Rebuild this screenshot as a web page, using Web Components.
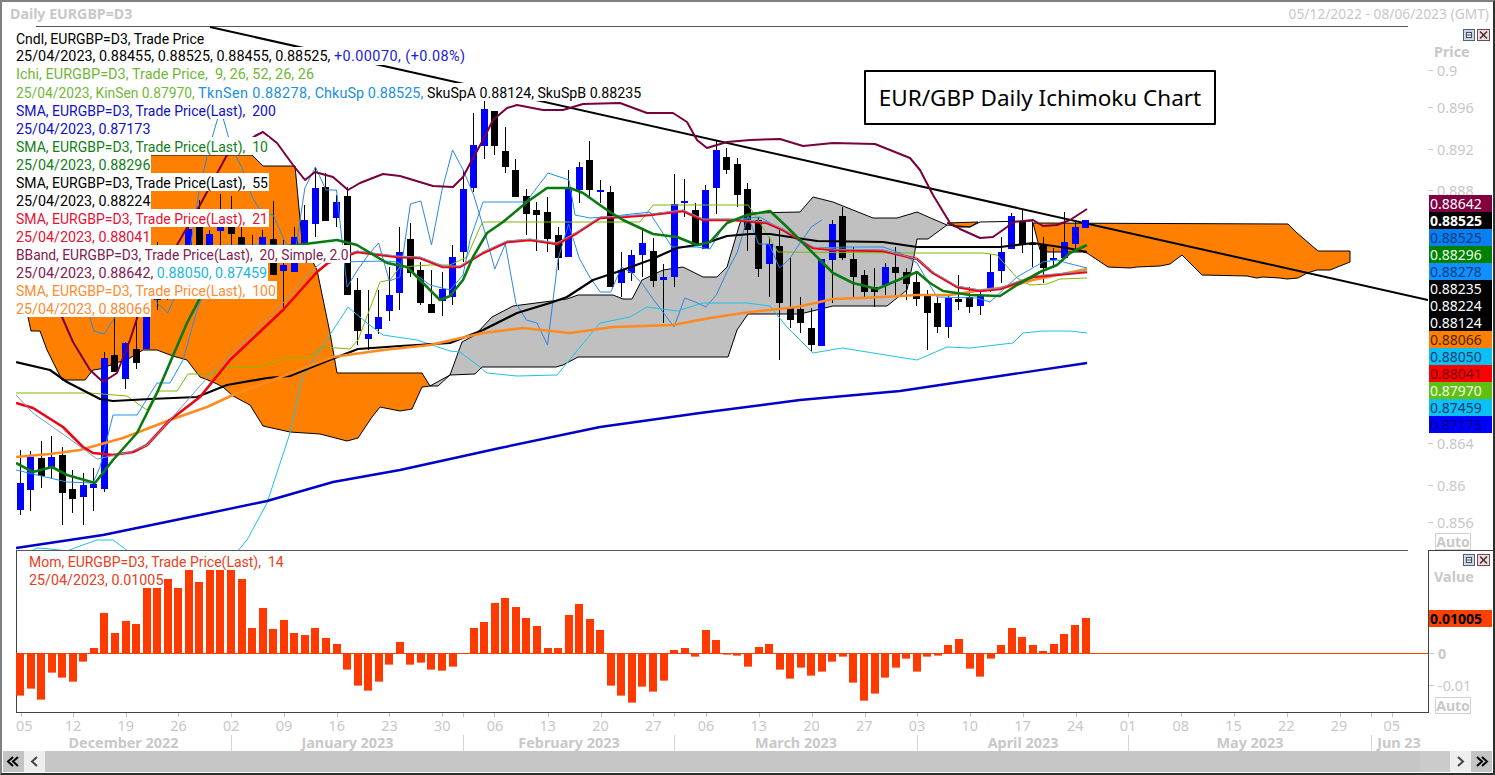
<!DOCTYPE html>
<html><head><meta charset="utf-8"><title>EUR/GBP</title>
<style>html,body{margin:0;padding:0;background:#fff}body{font-family:"Noto Sans","Liberation Sans",sans-serif}</style>
</head><body>
<chart-window></chart-window>
<script>
const FONT='"Noto Sans","Liberation Sans",sans-serif';
const LFONT='Roboto,"Noto Sans",sans-serif';
const X=i=>20+10.55*i;
// [type, bodyTop, bodyBottom, wickTop, wickBottom]
const C=`b 483 510 450 515|b 457 490 451 511|k 458 476 441 488|b 457 467 436 478|k 455 493 447 525|k 489 499 470 513|b 485 497 473 525|b 484 488 468 511|b 358 489 352 492|k 355 372 317 372|b 343 379 342 389|k 349 363 317 369|b 300 349 285 349|k 295 300 242 310|k 285 295 270 300|k 270 280 250 290|b 229 255 225 262|k 227 262 200 262|b 234 260 230 265|b 227 231 194 245|k 227 234 196 245|k 237 255 227 270|k 245 255 235 265|b 237 262 230 270|k 239 275 201 275|b 265 271 240 308|b 237 272 227 272|b 220 258 205 262|b 188 224 167 237|k 187 221 173 221|b 202 218 195 227|k 196 295 187 295|k 290 331 278 345|b 334 339 290 350|b 317 329 290 334|b 295 311 267 321|b 252 293 227 310|k 239 273 223 277|k 270 303 262 305|k 304 313 270 313|b 289 301 272 316|b 257 297 245 305|b 189 252 170 262|b 145 188 113 192|b 109 146 101 159|k 111 146 111 155|k 151 167 127 173|k 170 197 159 197|k 196 214 189 235|k 210 215 202 251|k 212 239 197 252|k 235 258 227 270|b 188 257 170 257|b 167 190 162 203|k 160 190 141 197|b 190 192 180 203|k 192 287 186 287|b 270 283 252 297|b 255 273 250 281|b 243 255 228 277|k 251 281 238 287|b 277 280 264 323|b 204 277 174 287|b 201 203 179 217|k 210 245 203 245|b 190 249 185 249|b 150 188 140 214|k 157 170 148 174|k 164 195 158 207|k 189 230 183 251|k 220 269 217 277|b 244 264 237 297|k 246 303 230 360|k 308 320 257 328|k 309 323 297 333|k 328 345 308 352|b 259 346 259 346|b 224 260 220 303|k 216 258 207 260|k 259 277 247 298|k 275 292 270 298|k 287 292 268 307|b 267 285 263 295|k 267 273 247 297|k 272 284 268 300|k 282 299 272 306|k 296 313 290 350|k 303 327 297 333|b 298 327 295 338|k 299 302 275 310|k 297 307 287 313|b 295 306 292 315|b 272 288 254 292|b 252 271 237 283|b 216 249 213 249|k 222 244 210 253|k 243 244 222 267|k 244 268 237 283|b 258 260 248 268|b 242 258 212 258|b 227 244 220 250|b 220 228 220 228`
 .split('|').map(s=>{const p=s.split(' ');return {t:p[0],a:+p[1],b:+p[2],w:+p[3],z:+p[4]}});
const close=c=>c.t==='b'?c.a:c.b;
const L={
 sma200:'16,548 103,535 200,515 267,501 333,482 400,470 500,448 600,427 700,413 800,400 900,391 1000,376 1087,363',
 upper:'16,250 40,290 62,317 73,342 90,370 103,382 117,373 130,340 143,300 177,245 200,205 227,155 255,136 263,132 277,143 293,165 305,180 315,172 333,177 348,190 360,183 383,174 400,176 433,186 453,187 463,177 472,160 483,140 493,120 507,108 517,105 543,110 563,110 583,104 620,103 647,113 673,113 687,122 697,140 707,148 727,142 750,140 780,139 803,146 833,143 875,144 910,158 920,170 933,195 950,223 960,229 980,238 993,237 1007,227 1013,222 1033,220 1043,226 1057,225 1070,220 1087,209',
 lower:'16,560 37,548 50,549 67,551 80,546 97,540 113,540 128,551 230,560 247,540 267,503 290,433 302,377 320,350 348,307 367,323 383,335 417,340 450,351 460,352 480,367 487,373 517,376 557,375 567,363 600,323 630,317 647,307 677,311 703,303 747,303 770,306 787,327 813,353 842,348 917,360 947,347 970,348 1013,343 1023,333 1043,331 1070,331 1087,333',
 mid:'16,395 33,413 67,437 97,459 130,452 147,445 170,420 207,378 233,353 283,303 310,272 322,262 357,251 397,256 420,257 443,266 460,266 483,252 507,241 530,239 557,243 577,232 600,217 623,216 650,214 683,210 703,219 733,219 767,222 783,229 813,247 833,249 883,250 917,259 933,272 957,286 980,290 1000,288 1033,276 1087,271',
 tenkan:'16,470 50,478 67,482 93,483 100,467 113,415 137,415 157,383 170,383 183,360 197,310 205,290 225,245 263,245 285,245 310,262 340,262 385,261 397,262 410,270 430,285 450,290 463,275 470,240 483,202 526,202 548,173 569,180 575,215 590,218 607,217 623,215 650,212 653,218 672,247 697,247 710,249 720,232 727,222 740,219 760,217 777,227 797,240 812,248 847,247 883,247 900,253 917,263 927,280 937,297 977,298 990,302 1017,277 1043,262 1057,260 1067,263 1087,268',
 kijun:'16,393 90,393 127,396 147,410 157,391 177,391 188,374 213,374 227,367 260,367 283,358 307,358 323,347 350,349 358,340 380,282 390,280 400,267 430,265 450,265 467,257 480,227 483,222 640,222 653,205 748,205 757,218 778,252 913,253 983,253 997,255 1017,278 1030,285 1047,284 1060,279 1087,278',
 sma10:'16,463 33,472 52,467 67,475 95,483 113,460 137,433 157,393 187,323 200,298 215,270 240,252 280,247 313,243 337,240 357,245 387,263 407,267 423,283 440,300 450,296 463,280 473,257 487,233 503,222 527,202 547,188 570,188 583,193 607,210 623,220 653,234 677,237 697,245 710,242 727,223 747,215 770,211 787,227 803,243 817,257 833,273 853,283 877,289 917,272 930,283 943,291 970,295 1000,296 1017,285 1040,272 1057,265 1070,253 1087,245',
 sma55:'16,362 50,370 67,382 100,399 113,401 150,399 197,397 227,385 267,378 290,376 327,361 358,349 400,346 450,343 483,330 517,313 550,303 567,297 593,280 617,272 650,260 677,248 703,244 727,236 750,234 770,234 817,241 883,242 917,247 1000,247 1033,243 1067,248 1087,252',
 sma21:'16,403 33,408 63,427 83,447 93,453 113,455 133,452 147,445 170,420 200,397 230,360 283,310 317,272 328,263 357,252 397,257 420,258 443,267 460,267 483,253 507,242 530,240 557,244 577,233 600,218 623,217 650,215 683,211 703,220 733,220 767,223 783,230 813,248 833,250 883,251 917,259 933,273 957,287 980,291 1000,289 1033,277 1087,272',
 sma100:'16,457 50,454 80,450 123,438 170,420 207,407 233,395 333,357 383,350 430,345 483,333 523,328 570,333 613,327 673,325 710,318 750,312 797,307 833,299 883,297 917,295 950,295 983,290 1007,287 1033,280 1087,269'
};
const ORANGE1='16,155 252,155 263,166 295,166 302,240 317,270 330,333 337,373 422,373 430,386 422,387 412,409 400,411 380,407 372,417 358,438 347,441 320,434 290,432 263,426 250,405 233,396 223,387 213,382 200,377 193,368 187,360 173,356 157,350 143,350 130,358 100,369 93,370 85,380 62,380 47,350 40,331 31,331 28,317 16,300';
const GREY='430,386 438,386 450,375 462,342 475,335 492,317 513,306 567,299 578,295 613,295 623,299 632,299 642,280 663,270 683,267 703,277 717,277 727,267 740,223 750,213 800,212 813,197 833,202 873,218 897,218 917,212 933,219 947,225 928,239 917,239 913,262 907,290 887,306 833,306 800,314 748,314 737,330 728,357 578,357 563,365 556,367 482,367 475,374 450,375 430,386';
const ORANGE2='947,223 978,222 970,227 955,227';
const ORANGE3='1033,223 1288,224 1296,232 1318,251 1350,251 1350,262 1330,270 1317,270 1307,273 1298,278 1287,279 1280,278 1263,277 1257,278 1247,276 1202,275 1182,255 1170,264 1160,266 1137,267 1130,268 1108,267 1087,253 1083,252 1048,252 1040,250';
const MOM=[-127,-106,-139,-58,-73,-85,-25,16,121,61,97,88,196,196,223,196,250,214,250,250,250,223,76,136,73,100,61,55,76,46,28,-49,-97,-112,-85,-34,34,-34,-28,-49,-52,-40,0,76,94,151,166,139,106,82,16,16,115,148,103,70,-97,-127,-148,-100,-115,-82,10,16,-10,70,40,-4,-7,-40,19,28,-49,-76,-43,-67,-55,-25,-10,-88,-142,-121,-73,-43,-16,-55,-10,-7,25,43,-46,-70,-16,25,76,49,25,7,28,58,85,106];
const el=(h)=>{const t=document.createElement('template');t.innerHTML=h;return t};
class Base extends HTMLElement{
  constructor(){super();const s=this.attachShadow({mode:'open'});s.appendChild(this.constructor.tpl().content.cloneNode(true));}
}
class WinButtons extends Base{static tpl(){return el(`<style>:host{position:absolute;top:3px;right:3px;display:flex;gap:2px}svg{display:block}</style>
<svg width="12" height="12" viewBox="0 0 12 12"><rect x=".5" y=".5" width="11" height="11" fill="#dfe4ee" stroke="#50607c"/><rect x="1.5" y="1.5" width="9" height="9" fill="#c9d0de"/><rect x="3.5" y="3.5" width="5" height="5" fill="#eef1f6" stroke="#404c66"/><rect x="4" y="5.5" width="4" height="1" fill="#404c66"/></svg>
<svg width="13" height="12" viewBox="0 0 13 12"><rect x=".5" y=".5" width="12" height="11" fill="#eedfe0" stroke="#6a4a50"/><path d="M3 2.500l7 7M10 2.500l-7 7" stroke="#453038" stroke-width="1.600"/></svg>`)}}
class AutoTag extends Base{static tpl(){return el(`<style>:host{position:absolute;left:7px;width:34px;height:15px;border:1px solid #d0d0d0;color:#c8c8c8;font:bold 14px/15px ${FONT};text-align:center}</style>Auto`)}}
class AxisTick extends Base{static tpl(){return el(`<style>:host{position:absolute;left:0;top:calc(var(--y)*1px - 9px);height:18px;padding-left:9px;color:#c8c8c8;font:14.400px/18px ${FONT};white-space:nowrap}:host::before{content:"";position:absolute;left:0;top:8px;width:5px;height:1px;background:#c8c8c8}</style><slot></slot>`)}}
class ValueTag extends Base{static tpl(){return el(`<style>:host{display:block;height:17px;padding-left:1px;font:14px/17px ${FONT};background:var(--bg);color:var(--fg)}</style><slot></slot>`)}}
class PriceAxis extends Base{static tpl(){return el(`<style>:host{display:block;position:relative;height:524px;background:#fff}
.h{position:absolute;left:6px;top:17px;color:#c8c8c8;font:bold 14.400px/18px ${FONT}}
.tags{position:absolute;left:1px;top:169px;width:63px}</style>
<win-buttons></win-buttons><div class="h">Price</div>
<axis-tick style="--y:45">0.9</axis-tick><axis-tick style="--y:82">0.896</axis-tick><axis-tick style="--y:124">0.892</axis-tick><axis-tick style="--y:165">0.888</axis-tick><axis-tick style="--y:418">0.864</axis-tick><axis-tick style="--y:460">0.86</axis-tick><axis-tick style="--y:497">0.856</axis-tick>
<div class="tags">
<value-tag style="--bg:#800040;--fg:#fff">0.88642</value-tag>
<value-tag style="--bg:#000;--fg:#fff;font-weight:bold">0.88525</value-tag>
<value-tag style="--bg:#0a80f0;--fg:#063c80">0.88525</value-tag>
<value-tag style="--bg:#008000;--fg:#e8ffe8">0.88296</value-tag>
<value-tag style="--bg:#1090ff;--fg:#063c80">0.88278</value-tag>
<value-tag style="--bg:#000;--fg:#fff">0.88235</value-tag>
<value-tag style="--bg:#000;--fg:#fff">0.88224</value-tag>
<value-tag style="--bg:#000;--fg:#fff">0.88124</value-tag>
<value-tag style="--bg:#ff8000;--fg:#4c2600">0.88066</value-tag>
<value-tag style="--bg:#0cc0f4;--fg:#063c70">0.88050</value-tag>
<value-tag style="--bg:#ff0000;--fg:#700000">0.88041</value-tag>
<value-tag style="--bg:#60c010;--fg:#f0fff0">0.87970</value-tag>
<value-tag style="--bg:#0cc0f4;--fg:#063c70">0.87459</value-tag>
<value-tag style="--bg:#0000ff;--fg:#000080">0.87173</value-tag>
</div><auto-tag style="top:507px"></auto-tag>`)}}
class ValueAxis extends Base{static tpl(){return el(`<style>:host{display:block;position:relative;height:163px;box-sizing:border-box;border-top:1px solid #404040;border-left:1px solid #404040}
.h{position:absolute;left:5px;top:17px;color:#c8c8c8;font:bold 14.400px/18px ${FONT}}
.v{position:absolute;left:0;top:59px;width:63px;height:17px;background:#ff4000;color:#000;font:bold 14px/17px ${FONT};padding-left:1px;box-sizing:border-box}
</style><win-buttons></win-buttons><div class="h">Value</div><div class="v">0.01005</div>
<axis-tick style="--y:103;font-weight:bold">0</axis-tick><axis-tick style="--y:135">-0.01</axis-tick><auto-tag style="top:146px;left:6px"></auto-tag>`)}}
class TradeLegend extends Base{static tpl(){return el(`<style>:host{position:absolute;left:0;top:var(--top,3px);display:block;font:14.300px/20px ${LFONT}}
::slotted(div){width:fit-content;height:18px;background:#fff;padding-right:1px;white-space:pre}
::slotted(div.t){font-size:14px}</style><slot></slot>`)}}
class PricePlot extends Base{static tpl(){
 const line=(k,c,w)=>`<polyline points="${L[k]}" fill="none" stroke="${c}" stroke-width="${w}" stroke-linejoin="round"/>`;
 const poly=(p,f)=>`<polygon points="${p}" fill="${f}" stroke="#000" stroke-width="1"/>`;
 const ch=[];for(let j=0;j<=76;j++)ch.push(X(j).toFixed(1)+','+close(C[j+25]));
 let cs='';C.forEach((c,i)=>{const x=Math.round(X(i)-3.5);const col=c.t==='b'?'#0000ff':'#000';
  cs+=`<rect x="${x+3}" y="${c.w}" width="1" height="${c.z-c.w}" fill="#000"/><rect x="${x}" y="${c.a}" width="7" height="${Math.max(2,c.b-c.a)}" fill="${col}"/>`});
 return el(`<style>:host{display:block;position:relative;height:524px;background:#fff}svg{display:block;position:absolute;inset:0}
 .box{position:absolute;left:848px;top:44px;width:352px;height:55px;box-sizing:border-box;border:2px solid #000;border-radius:1px;background:#fff;font:22.500px/51px ${FONT};text-align:center;color:#000;white-space:nowrap}</style>
 <svg width="1412" height="524" viewBox="16 26 1412 524">
 <line x1="36" y1="26.500" x2="1408" y2="26.500" stroke="#555"/>
 ${poly(ORANGE1,'#ff8000')}${poly(GREY,'#c0c0c0')}${poly(ORANGE2,'#ff8000')}${poly(ORANGE3,'#ff8000')}
 <polyline points="947,225 970,227 980,222 1033,221" fill="none" stroke="#000"/>
 <line x1="210" y1="27" x2="1428" y2="300" stroke="#000" stroke-width="2"/>
 <g shape-rendering="crispEdges">${cs}</g>
 ${line('kijun','#80b800',1)}${line('tenkan','#2090f0',1)}<polyline points="${ch.join(' ')}" fill="none" stroke="#2f86e0" stroke-width="1"/>
 ${line('lower','#20c0e8',1)}
 ${line('sma200','#0000c8',2.4)}${line('sma55','#000',2.2)}${line('sma100','#ff8a20',2.6)}${line('sma21','#f00010',2.6)}${line('mid','#7a9cc0',1)}${line('sma10','#0a7a10',2.6)}${line('upper','#78003c',2)}
 </svg><slot></slot><div class="box">EUR/GBP Daily Ichimoku Chart</div>`)}}
class MomPlot extends Base{static tpl(){
 let b='';MOM.forEach((h,i)=>{const x=Math.round(16+10.55*i);const v=h/3;if(!v)return;b+=`<rect x="${x}" y="${v>0?653.3-v:653.3}" width="8" height="${Math.abs(v)}" fill="#ff3a00"/>`});
 return el(`<style>:host{display:block;position:relative;height:163px;background:#fff}svg{display:block;position:absolute;inset:0}</style>
 <svg width="1412" height="163" viewBox="16 550 1412 163">
 <line x1="16.500" y1="550" x2="16.500" y2="713" stroke="#444"/><line x1="16" y1="712.500" x2="1428" y2="712.500" stroke="#444"/><line x1="16" y1="550.500" x2="1408" y2="550.500" stroke="#555"/>
 <rect x="16" y="653" width="1412" height="1" fill="#ff4000"/>${b}</svg><slot></slot>`)}}
class PricePane extends Base{static tpl(){return el(`<style>:host{display:grid;grid-template-columns:14px 1412px 65px;height:524px}</style><i></i><price-plot><trade-legend>
<div class="t">Cndl, EURGBP=D3, Trade Price</div>
<div style="font-size:14.400px">25/04/2023, 0.88455, 0.88525, 0.88455, 0.88525, <span style="color:#2020d8;letter-spacing:.45px">+0.00070, (+0.08%)</span></div>
<div style="color:#70b838;font-size:14.500px">Ichi, EURGBP=D3, Trade Price,  9, 26, 52, 26, 26</div>
<div style="color:#70b838;font-size:13.800px">25/04/2023, KinSen 0.87970, <span style="color:#2090e0;font-size:14.400px;letter-spacing:.4px">TknSen 0.88278, </span><span style="color:#2090e0;font-size:14.400px;letter-spacing:.05px">ChkuSp 0.88525, </span><span style="color:#000;font-size:14.200px">SkuSpA 0.88124, SkuSpB 0.88235</span></div>
<div class="t" style="color:#1010c8">SMA, EURGBP=D3, Trade Price(Last),  200</div>
<div style="color:#1010c8">25/04/2023, 0.87173</div>
<div class="t" style="color:#108018">SMA, EURGBP=D3, Trade Price(Last),  10</div>
<div style="color:#108018">25/04/2023, 0.88296</div>
<div class="t">SMA, EURGBP=D3, Trade Price(Last),  55</div>
<div>25/04/2023, 0.88224</div>
<div class="t" style="color:#e81030">SMA, EURGBP=D3, Trade Price(Last),  21</div>
<div style="color:#e81030">25/04/2023, 0.88041</div>
<div class="t" style="color:#802050;font-size:13.800px">BBand, EURGBP=D3, Trade Price(Last),  20, Simple, 2.0</div>
<div style="color:#802050">25/04/2023, 0.88642, <span style="color:#20b8e0">0.88050, 0.87459</span></div>
<div class="t" style="color:#ff8c30">SMA, EURGBP=D3, Trade Price(Last),  100</div>
<div style="color:#ff8c30">25/04/2023, 0.88066</div>
</trade-legend></price-plot><price-axis></price-axis>`)}}
class MomPane extends Base{static tpl(){return el(`<style>:host{display:grid;grid-template-columns:14px 1412px 65px;height:163px}</style><i></i><mom-plot><trade-legend style="--top:2px;left:13px;color:#e84020">
<div class="t">Mom, EURGBP=D3, Trade Price(Last),  14</div><div>25/04/2023, 0.01005</div></trade-legend></mom-plot><value-axis></value-axis>`)}}
class TimeAxis extends Base{static tpl(){
 const days=['05','12','19','26','02','09','16','23','30','06','13','20','27','06','13','20','27','03','10','17','24','01','08','15','22','29','05'];
 const ticks=[20.5,73,126,178,231,284,337,389,442,463,494,548,601,653,674,706,759,812,865,917,970,1023,1076,1128,1181,1234,1287,1340,1371,1392];
 const months=[['December 2022',216],['January 2023',232],['February 2023',211],['March 2023',243],['April 2023',211],['May 2023',243],['Jun 23',54]];
 return el(`<style>:host{display:block;height:38px;color:#c8c8c8;overflow:hidden}
 svg{display:block;height:4px;width:1491px}
 .d{display:flex;height:18px;padding-left:14px;font:14.400px/18px ${FONT}}.d span{flex:0 0 52.75px;text-align:center}.d span:first-child{flex-basis:30.6px;text-align:left}
 .m{display:flex;height:16px;padding-left:14px;font:bold 14.400px/16px ${FONT}}.m span{text-align:center;box-sizing:border-box;border-right:1px solid #d4d4d4;white-space:nowrap}.m span:last-child{border:0}</style>
 <svg viewBox="2 0 1491 4">${ticks.map(t=>`<rect x="${Math.round(t)}" y="0" width="1" height="4" fill="#c4c4c4"/>`).join('')}</svg>
 <div class="d">${days.map(d=>`<span>${d}</span>`).join('')}</div>
 <div class="m">${months.map(m=>`<span style="width:${m[1]}px">${m[0]}</span>`).join('')}</div>`)}}
class ScrollStrip extends Base{static tpl(){
 const ch=(d,c)=>`<svg width="21" height="21" viewBox="0 0 21 21"><path d="${d}" fill="none" stroke="${c}" stroke-width="2"/></svg>`;
 return el(`<style>:host{display:flex;height:21px;padding-left:1px;width:1490px;box-sizing:border-box}
 .b{flex:0 0 21px;height:21px}.o{background:#c4c4c4}.i{background:#eee}
 .t{flex:1 1 auto;background:linear-gradient(to right,#c6c6c6 1375px,#cbcbcb 1375px)}svg{display:block}</style>
 <div class="b o">${ch('M10 6l-5 4.500 5 4.500M15 6l-5 4.500 5 4.500','#000')}</div><div class="b i">${ch('M13 6l-5 4.500 5 4.500','#444')}</div><div class="t"></div>
 <div class="b i">${ch('M8 6l5 4.500-5 4.500','#444')}</div><div class="b o">${ch('M6 6l5 4.500-5 4.500M11 6l5 4.500-5 4.500','#000')}</div>`)}}
class ChartTitle extends Base{static tpl(){return el(`<style>:host{display:flex;justify-content:space-between;align-items:center;height:24px;padding:0 4px 0 8px;color:#c8c8c8;font:13.800px/24px ${FONT}}b{font-weight:bold;font-size:14.200px}</style><b>Daily EURGBP=D3</b><span>05/12/2022 - 08/06/2023 (GMT)</span>`)}}
class ChartWindow extends Base{static tpl(){return el(`<style>:host{display:block;width:1495px;height:775px;box-sizing:border-box;border:2px solid;border-color:#808080 #303030 #303030 #808080;background:#fff;overflow:hidden}</style>
<chart-title></chart-title><price-pane></price-pane><mom-pane></mom-pane><time-axis></time-axis><scroll-strip></scroll-strip>`)}}
const defs={'win-buttons':WinButtons,'auto-tag':AutoTag,'axis-tick':AxisTick,'value-tag':ValueTag,'price-axis':PriceAxis,'value-axis':ValueAxis,'trade-legend':TradeLegend,'price-plot':PricePlot,'mom-plot':MomPlot,'price-pane':PricePane,'mom-pane':MomPane,'time-axis':TimeAxis,'scroll-strip':ScrollStrip,'chart-title':ChartTitle,'chart-window':ChartWindow};
for(const k in defs)customElements.define(k,defs[k]);
</script></body></html>
